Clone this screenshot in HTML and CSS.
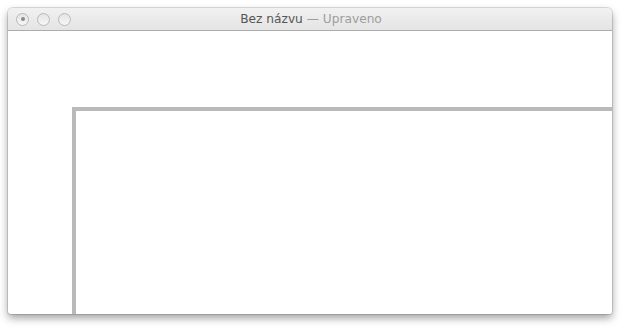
FILE: index.html
```html
<!DOCTYPE html>
<html>
<head>
<meta charset="utf-8">
<link rel="stylesheet" href="styles.css">
</head>
<body>
<div class="window">
  <div class="titlebar">
    <div class="lights">
      <span class="light dot"></span>
      <span class="light"></span>
      <span class="light"></span>
    </div>
    <div class="title"><span class="text"><span class="name">Bez názvu</span> <span class="edited">— Upraveno</span></span></div>
  </div>
  <div class="content">
    <div class="shape"></div>
  </div>
</div>
</body>
</html>
```
FILE: styles.css
```css
html, body { margin: 0; padding: 0; background: #ffffff; }
body { padding: 8px 12px 18px 8px; width: 604px; height: 306px; }
.window {
  width: 604px;
  height: 306px;
  display: flex;
  flex-direction: column;
  border-radius: 5px 5px 3px 3px;
  overflow: hidden;
  box-shadow: 0 0 0 1px rgba(0,0,0,0.12), 0 4px 9px rgba(0,0,0,0.38);
  background: #fff;
}
.titlebar {
  height: 22px;
  flex: none;
  background: linear-gradient(#f1f1f1, #e4e4e4);
  border-bottom: 1px solid #adadad;
  display: flex;
  align-items: center;
  position: relative;
}
.lights { display: flex; gap: 8px; padding-left: 8px; }
.light {
  width: 11px; height: 11px;
  border-radius: 50%;
  border: 1px solid #b8b8b8;
  background: linear-gradient(#e4e4e4, #f7f7f7);
  box-sizing: content-box;
  display: flex; align-items: center; justify-content: center;
}
.light.dot::after {
  content: "";
  width: 4px; height: 4px; border-radius: 50%;
  background: #8a8a8a;
}
.title {
  position: absolute; left: 0; right: 0; top: 0; bottom: 0;
  display: flex; align-items: center; justify-content: center;
  font-family: "DejaVu Sans", sans-serif;
  font-size: 12.2px;
  padding-left: 2px;
}
.text { white-space: pre; }
.name { color: #555555; }
.edited { color: #9d9d9d; }
.content {
  flex: 1;
  padding: 76px 0 0 64px;
  overflow: hidden;
  display: flex;
}
.shape {
  flex: 1;
  border-top: 4px solid #bababa;
  border-left: 4px solid #bababa;
  background: #fff;
  margin-right: -10px;
  margin-bottom: -10px;
}
```
